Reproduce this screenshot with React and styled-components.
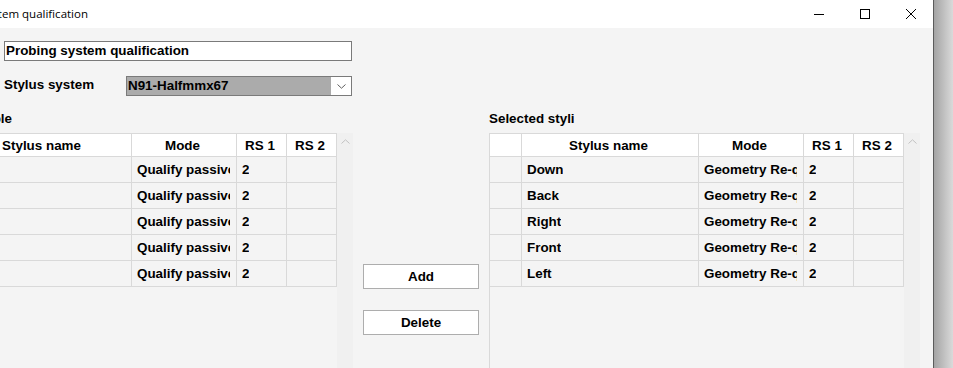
import React from "react";
import styled, { createGlobalStyle } from "styled-components";

const GlobalStyle = createGlobalStyle`
  html, body {
    margin: 0;
    padding: 0;
    overflow: hidden;
  }
  body {
    font-family: "Liberation Sans", Arial, sans-serif;
  }
`;

const Screen = styled.div`
  display: flex;
  width: 953px;
  height: 368px;
  overflow: hidden;
`;

const Window = styled.div`
  display: flex;
  flex-direction: column;
  width: 933px;
  height: 368px;
  background: #f4f4f4;
  border-right: 1px solid #5b5b5b;
  overflow: hidden;
  flex-shrink: 0;
`;

const Desktop = styled.div`
  flex: 1;
  background: linear-gradient(to right, #a4a4a4, #dadada);
`;

const TitleBar = styled.div`
  display: flex;
  align-items: center;
  height: 28px;
  background: #ffffff;
  flex-shrink: 0;
`;

const ClipText = styled.div`
  display: flex;
  justify-content: flex-end;
  width: ${(p) => p.$width}px;
  overflow: hidden;
  white-space: nowrap;
  flex-shrink: 0;
`;

const TitleText = styled.span`
  font-family: "Open Sans", "Noto Sans", sans-serif;
  font-size: 11.5px;
  color: #000;
  flex-shrink: 0;
  margin-top: -1px;
`;

const Controls = styled.div`
  display: flex;
  margin-left: auto;
  height: 28px;
`;

const ControlButton = styled.div`
  display: flex;
  align-items: center;
  justify-content: center;
  width: ${(p) => p.$w || 46}px;
  height: 28px;
`;

const Body = styled.div`
  display: flex;
  flex-direction: column;
  padding: 13px 0 0 4px;
  flex: 1;
  min-height: 0;
`;

const TextBox = styled.div`
  box-sizing: border-box;
  width: 348px;
  height: 20px;
  border: 1px solid #7a7a7a;
  background: #fff;
  padding-left: 1px;
  font-size: 13.4px;
  font-weight: bold;
  line-height: 18px;
  color: #000;
`;

const FieldRow = styled.div`
  display: flex;
  align-items: center;
  margin-top: 15px;
  height: 20px;
`;

const FieldLabel = styled.div`
  width: 122px;
  font-size: 13.4px;
  font-weight: bold;
  margin-top: -4px;
`;

const Combo = styled.div`
  box-sizing: border-box;
  display: flex;
  width: 226px;
  height: 20px;
  border: 1px solid #7a7a7a;
  background: #fff;
`;

const ComboValue = styled.div`
  flex: 1;
  background: #ababab;
  padding-left: 1px;
  font-size: 13.4px;
  font-weight: bold;
  line-height: 18px;
`;

const ComboArrow = styled.div`
  display: flex;
  align-items: center;
  justify-content: center;
  width: 20px;
`;

const Panels = styled.div`
  display: flex;
  margin-top: 14px;
  flex: 1;
  min-height: 0;
`;

const Panel = styled.div`
  display: flex;
  flex-direction: column;
  margin-left: ${(p) => p.$shift || 0}px;
`;

const PanelLabel = styled.div`
  height: 23px;
  font-size: 13.4px;
  font-weight: bold;
  line-height: 18px;
`;

const GridWrap = styled.div`
  display: flex;
  flex: 1;
`;

const Grid = styled.div`
  display: grid;
  grid-template-columns: ${(p) => p.$cols};
  grid-auto-rows: 26px;
  grid-template-rows: 23px;
  align-content: start;
  border-top: 1px solid #d9d9d9;
  align-self: stretch;
`;

const Cell = styled.div`
  box-sizing: border-box;
  display: flex;
  align-items: center;
  justify-content: ${(p) => (p.$head ? "center" : "flex-start")};
  padding: 0 6px 0 ${(p) => (p.$head ? 3 : 5)}px;
  background: ${(p) => (p.$head ? "#ffffff" : "#f4f4f4")};
  border-right: 1px solid #d9d9d9;
  border-bottom: 1px solid #d9d9d9;
  font-size: 13.4px;
  font-weight: bold;
  color: #000;
  white-space: nowrap;
  overflow: hidden;
  min-width: 0;
`;

const CellText = styled.span`
  display: block;
  overflow: hidden;
  white-space: nowrap;
  flex-shrink: 1;
  min-width: 0;
`;

const ScrollBar = styled.div`
  width: 16px;
  background: #f0f0f0;
  display: flex;
  flex-direction: column;
  align-items: center;
  padding-top: 6px;
  box-sizing: border-box;
`;

const Middle = styled.div`
  display: flex;
  flex-direction: column;
  gap: 21px;
  padding: 154px 10px 0 10px;
`;

const Button = styled.div`
  box-sizing: border-box;
  display: flex;
  align-items: center;
  justify-content: center;
  width: 116px;
  height: 25px;
  background: #fff;
  border: 1px solid #adadad;
  font-size: 13.4px;
  font-weight: bold;
`;

const RightArea = styled.div`
  display: flex;
  flex-direction: column;
  border-left: 1px solid #d9d9d9;
`;

const columns = "32px 177px 105px 50px 50px";
const headers = ["", "Stylus name", "Mode", "RS 1", "RS 2"];

const available = [
  { name: "", mode: "Qualify passive", rs1: "2", rs2: "" },
  { name: "", mode: "Qualify passive", rs1: "2", rs2: "" },
  { name: "", mode: "Qualify passive", rs1: "2", rs2: "" },
  { name: "", mode: "Qualify passive", rs1: "2", rs2: "" },
  { name: "", mode: "Qualify passive", rs1: "2", rs2: "" },
];

const selected = [
  { name: "Down", mode: "Geometry Re-qualification", rs1: "2", rs2: "" },
  { name: "Back", mode: "Geometry Re-qualification", rs1: "2", rs2: "" },
  { name: "Right", mode: "Geometry Re-qualification", rs1: "2", rs2: "" },
  { name: "Front", mode: "Geometry Re-qualification", rs1: "2", rs2: "" },
  { name: "Left", mode: "Geometry Re-qualification", rs1: "2", rs2: "" },
];

function Chevron({ up, color = "#606060" }) {
  return (
    <svg width="9" height="5" viewBox="0 0 9 5">
      <path
        d={up ? "M0.5 4.5 L4.5 0.8 L8.5 4.5" : "M0.5 0.5 L4.5 4.2 L8.5 0.5"}
        fill="none"
        stroke={color}
        strokeWidth="1"
      />
    </svg>
  );
}

function StylusGrid({ rows }) {
  return (
    <Grid $cols={columns}>
      {headers.map((h, i) => (
        <Cell key={"h" + i} $head>
          {h}
        </Cell>
      ))}
      {rows.map((r, i) => (
        <React.Fragment key={i}>
          <Cell />
          <Cell>
            <CellText>{r.name}</CellText>
          </Cell>
          <Cell>
            <CellText>{r.mode}</CellText>
          </Cell>
          <Cell>
            <CellText>{r.rs1}</CellText>
          </Cell>
          <Cell>
            <CellText>{r.rs2}</CellText>
          </Cell>
        </React.Fragment>
      ))}
    </Grid>
  );
}

export default function App() {
  return (
    <Screen>
      <GlobalStyle />
      <Window>
        <TitleBar>
          <ClipText $width={88}>
            <TitleText>Probing system qualification</TitleText>
          </ClipText>
          <Controls>
            <ControlButton>
              <svg width="10" height="10" viewBox="0 0 10 10">
                <path d="M0 5.5 H10" stroke="#000" strokeWidth="1" />
              </svg>
            </ControlButton>
            <ControlButton>
              <svg width="10" height="10" viewBox="0 0 10 10">
                <rect x="0.5" y="0.5" width="9" height="9" fill="none" stroke="#000" strokeWidth="1" />
              </svg>
            </ControlButton>
            <ControlButton $w={45}>
              <svg width="10" height="10" viewBox="0 0 10 10">
                <path d="M0 0 L10 10 M10 0 L0 10" stroke="#000" strokeWidth="1" />
              </svg>
            </ControlButton>
          </Controls>
        </TitleBar>
        <Body>
          <TextBox>Probing system qualification</TextBox>
          <FieldRow>
            <FieldLabel>Stylus system</FieldLabel>
            <Combo>
              <ComboValue>N91-Halfmmx67</ComboValue>
              <ComboArrow>
                <Chevron />
              </ComboArrow>
            </Combo>
          </FieldRow>
          <Panels>
            <Panel $shift={-81}>
              <PanelLabel>
                <ClipText $width={89}>Stylus table</ClipText>
              </PanelLabel>
              <GridWrap>
                <StylusGrid rows={available} />
                <ScrollBar>
                  <Chevron up color="#c2c2c2" />
                </ScrollBar>
              </GridWrap>
            </Panel>
            <Middle>
              <Button>Add</Button>
              <Button>Delete</Button>
            </Middle>
            <Panel>
              <PanelLabel>Selected styli</PanelLabel>
              <GridWrap>
                <RightArea>
                  <StylusGrid rows={selected} />
                </RightArea>
                <ScrollBar>
                  <Chevron up color="#c2c2c2" />
                </ScrollBar>
              </GridWrap>
            </Panel>
          </Panels>
        </Body>
      </Window>
      <Desktop />
    </Screen>
  );
}
